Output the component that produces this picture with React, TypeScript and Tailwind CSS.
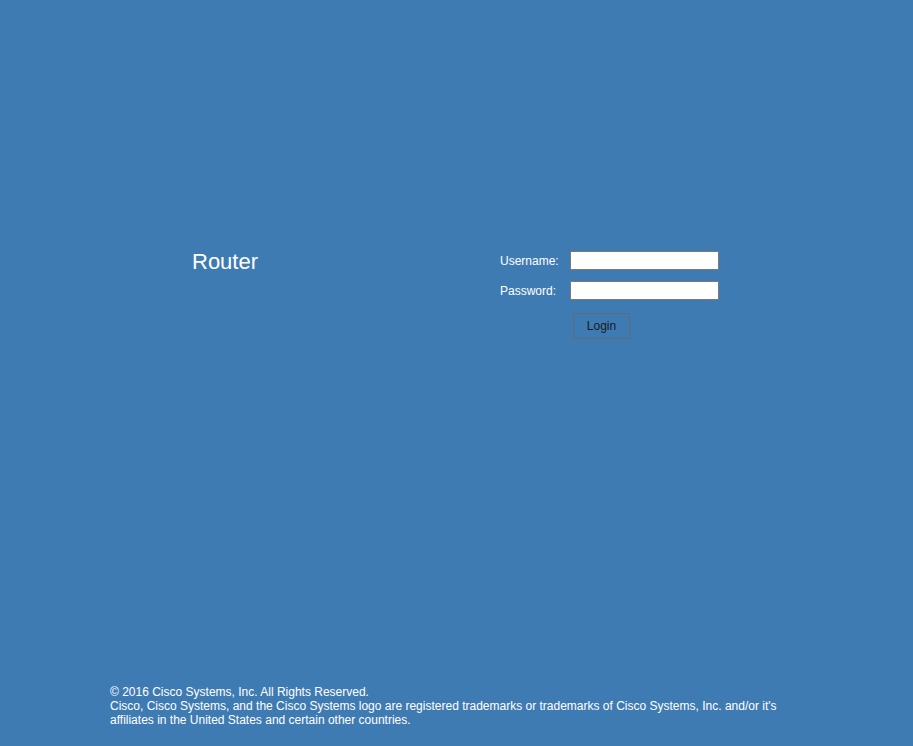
export default function App() {
    return (
        <div className="flex h-screen w-full flex-col justify-between bg-[#3f7bb3] font-['Liberation_Sans',Arial,sans-serif] text-white">
            <div className="flex pt-[249px] pl-[192px]">
                <div className="w-[308px] text-[22px] leading-[25px]">Router</div>
                <div className="mt-[2px] flex flex-col">
                    <div className="flex items-center">
                        <label className="w-[70px] text-[12px]">Username:</label>
                        <input type="text" className="h-[19px] w-[149px] border border-[#7a7a7a] bg-white px-1 text-[12px] text-black outline-none" />
                    </div>
                    <div className="mt-[11px] flex items-center">
                        <label className="w-[70px] text-[12px]">Password:</label>
                        <input type="password" className="h-[19px] w-[149px] border border-[#7a7a7a] bg-white px-1 text-[12px] text-black outline-none" />
                    </div>
                    <div className="mt-[13px] pl-[73px]">
                        <button className="h-[26px] w-[57px] border border-[#626a73] bg-transparent text-[12px] text-[#1a1a1a]">
                            Login
                        </button>
                    </div>
                </div>
            </div>
            <div className="w-[700px] pb-[19px] pl-[110px] box-content text-[12px] leading-[14px]">
                <div>© 2016 Cisco Systems, Inc. All Rights Reserved.</div>
                <div>
                    Cisco, Cisco Systems, and the Cisco Systems logo are registered trademarks or trademarks of Cisco Systems, Inc. and/or it's affiliates in the United States and certain other countries.
                </div>
            </div>
        </div>
    )
}
